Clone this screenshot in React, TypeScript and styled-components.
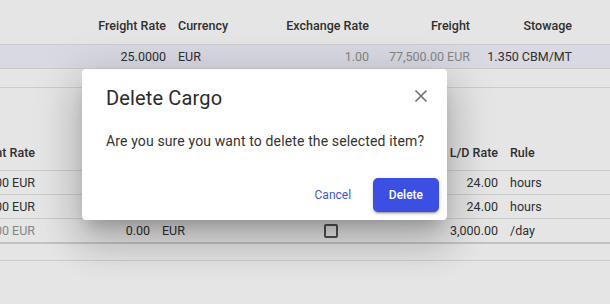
import React from "react"
import styled, { createGlobalStyle } from "styled-components"

const GlobalStyle = createGlobalStyle`
  html, body {
    margin: 0;
    padding: 0;
    background: #ffffff;
  }
  body {
    font-family: Roboto, "Noto Sans", Arial, sans-serif;
    color: #383838;
  }
  * { box-sizing: border-box; }
`

type Align = "left" | "right" | "center"

const Page = styled.div`
  position: relative;
  width: 610px;
  height: 304px;
  overflow: hidden;
  display: flex;
  flex-direction: column;
`

const TableBlock = styled.div<{ $offset?: number; $gap?: number }>`
  display: flex;
  flex-direction: column;
  margin-left: ${(p) => p.$offset ?? 0}px;
  margin-top: ${(p) => p.$gap ?? 0}px;
`

const HeadRow = styled.div<{ $cols: string; $height: number; $padTop: number }>`
  display: grid;
  grid-template-columns: ${(p) => p.$cols};
  height: ${(p) => p.$height}px;
  padding-top: ${(p) => p.$padTop}px;
  border-bottom: 1px solid #e4e4e4;
  font-size: 12.5px;
  font-weight: 500;
  line-height: 20px;
  color: #353535;
`

const BodyRow = styled.div<{ $cols: string; $selected?: boolean; $last?: boolean }>`
  display: grid;
  grid-template-columns: ${(p) => p.$cols};
  height: ${(p) => (p.$last ? 25 : 24)}px;
  background: ${(p) => (p.$selected ? "#f1f2fc" : "transparent")};
  border-bottom: ${(p) => (p.$last ? "2px solid #d9d9d9" : "1px solid #e4e4e4")};
  font-size: 12.5px;
  line-height: 23px;
  color: #363636;
`

const Spacer = styled.div<{ $height: number }>`
  height: ${(p) => p.$height}px;
  border-bottom: 1px solid #e4e4e4;
`

const Cell = styled.div<{ $align?: Align; $muted?: boolean }>`
  display: flex;
  align-items: center;
  justify-content: ${(p) =>
    p.$align === "right" ? "flex-end" : p.$align === "center" ? "center" : "flex-start"};
  padding: 0 6px;
  white-space: nowrap;
  color: ${(p) => (p.$muted ? "#959595" : "inherit")};
`

const Checkbox = styled.span`
  display: inline-block;
  width: 14px;
  height: 14px;
  border: 2px solid #5a5a5a;
  border-radius: 2px;
`

const Backdrop = styled.div`
  position: absolute;
  inset: 0;
  background: rgba(0, 0, 0, 0.1);
`

const Dialog = styled.div`
  position: absolute;
  left: 82px;
  top: 69px;
  width: 365px;
  height: 151px;
  background: #ffffff;
  border-radius: 4px;
  box-shadow: 0px 11px 15px -7px rgba(0, 0, 0, 0.2),
    0px 24px 38px 3px rgba(0, 0, 0, 0.14), 0px 9px 46px 8px rgba(0, 0, 0, 0.12);
  display: flex;
  flex-direction: column;
`

const Title = styled.h2`
  margin: 0;
  padding: 13px 24px 0;
  font-size: 20px;
  font-weight: 400;
  line-height: 32px;
  letter-spacing: 0.0075em;
  color: #2b2b2b;
`

const CloseButton = styled.button`
  position: absolute;
  top: 15px;
  right: 14px;
  width: 24px;
  height: 24px;
  padding: 0;
  border: 0;
  background: transparent;
  display: flex;
  align-items: center;
  justify-content: center;
  color: #6e6e6e;
  cursor: pointer;
`

const Content = styled.p`
  margin: 0;
  padding: 17px 20px 0 24px;
  font-size: 14px;
  line-height: 21px;
  letter-spacing: 0.00938em;
  white-space: nowrap;
  color: #333333;
`

const Actions = styled.div`
  margin-top: auto;
  display: flex;
  justify-content: flex-end;
  gap: 8px;
  padding: 8px;
`

const Button = styled.button<{ $variant: "text" | "contained" }>`
  min-width: 64px;
  height: 34px;
  padding: 0 ${(p) => (p.$variant === "contained" ? 16 : 8)}px;
  border: 0;
  border-radius: 5px;
  font-family: Roboto, "Noto Sans", Arial, sans-serif;
  font-size: 12px;
  font-weight: ${(p) => (p.$variant === "contained" ? 500 : 400)};
  color: ${(p) => (p.$variant === "contained" ? "#ffffff" : "#4658c8")};
  background: ${(p) => (p.$variant === "contained" ? "#3b50e3" : "transparent")};
  box-shadow: ${(p) =>
    p.$variant === "contained"
      ? "0px 3px 1px -2px rgba(0,0,0,0.2), 0px 2px 2px 0px rgba(0,0,0,0.14), 0px 1px 5px 0px rgba(0,0,0,0.12)"
      : "none"};
  cursor: pointer;
`

const topCols = "92px 80px 88px 115px 101px 102px 1fr"
const bottomCols = "101px 115px 104px 142px 102px 1fr"

const laytime = [
  { rate: "1,500.00 EUR", amount: "1,500.00", cur: "EUR", ld: "24.00", rule: "hours", muted: false },
  { rate: "1,500.00 EUR", amount: "1,500.00", cur: "EUR", ld: "24.00", rule: "hours", muted: false },
  { rate: "150.00 EUR", amount: "0.00", cur: "EUR", ld: "3,000.00", rule: "/day", muted: true },
]

export default function App() {
  return (
    <>
      <GlobalStyle />
      <Page>
        <TableBlock>
          <HeadRow $cols={topCols} $height={45} $padTop={8}>
            <Cell />
            <Cell $align="right">Freight Rate</Cell>
            <Cell>Currency</Cell>
            <Cell $align="right">Exchange Rate</Cell>
            <Cell $align="right">Freight</Cell>
            <Cell $align="right">Stowage</Cell>
            <Cell />
          </HeadRow>
          <BodyRow $cols={topCols} $selected>
            <Cell />
            <Cell $align="right">25.0000</Cell>
            <Cell>EUR</Cell>
            <Cell $align="right" $muted>1.00</Cell>
            <Cell $align="right" $muted>77,500.00 EUR</Cell>
            <Cell $align="right">1.350 CBM/MT</Cell>
            <Cell />
          </BodyRow>
          <Spacer $height={19} />
        </TableBlock>

        <TableBlock $offset={-60} $gap={44}>
          <HeadRow $cols={bottomCols} $height={39} $padTop={4}>
            <Cell $align="right">Freight Rate</Cell>
            <Cell />
            <Cell />
            <Cell />
            <Cell $align="right">L/D Rate</Cell>
            <Cell>Rule</Cell>
          </HeadRow>
          {laytime.map((r, i) => (
            <BodyRow key={i} $cols={bottomCols} $last={i === laytime.length - 1}>
              <Cell $align="right" $muted={r.muted}>{r.rate}</Cell>
              <Cell $align="right">{r.amount}</Cell>
              <Cell>{r.cur}</Cell>
              <Cell $align="center">
                <Checkbox />
              </Cell>
              <Cell $align="right">{r.ld}</Cell>
              <Cell>{r.rule}</Cell>
            </BodyRow>
          ))}
          <Spacer $height={17} />
        </TableBlock>

        <Backdrop />
        <Dialog role="dialog">
          <Title>Delete Cargo</Title>
          <CloseButton aria-label="close">
            <svg width="14" height="14" viewBox="0 0 14 14">
              <path d="M1.5 1.5 L12.5 12.5 M12.5 1.5 L1.5 12.5" stroke="currentColor" strokeWidth="1.6" />
            </svg>
          </CloseButton>
          <Content>Are you sure you want to delete the selected item?</Content>
          <Actions>
            <Button $variant="text">Cancel</Button>
            <Button $variant="contained">Delete</Button>
          </Actions>
        </Dialog>
      </Page>
    </>
  )
}
